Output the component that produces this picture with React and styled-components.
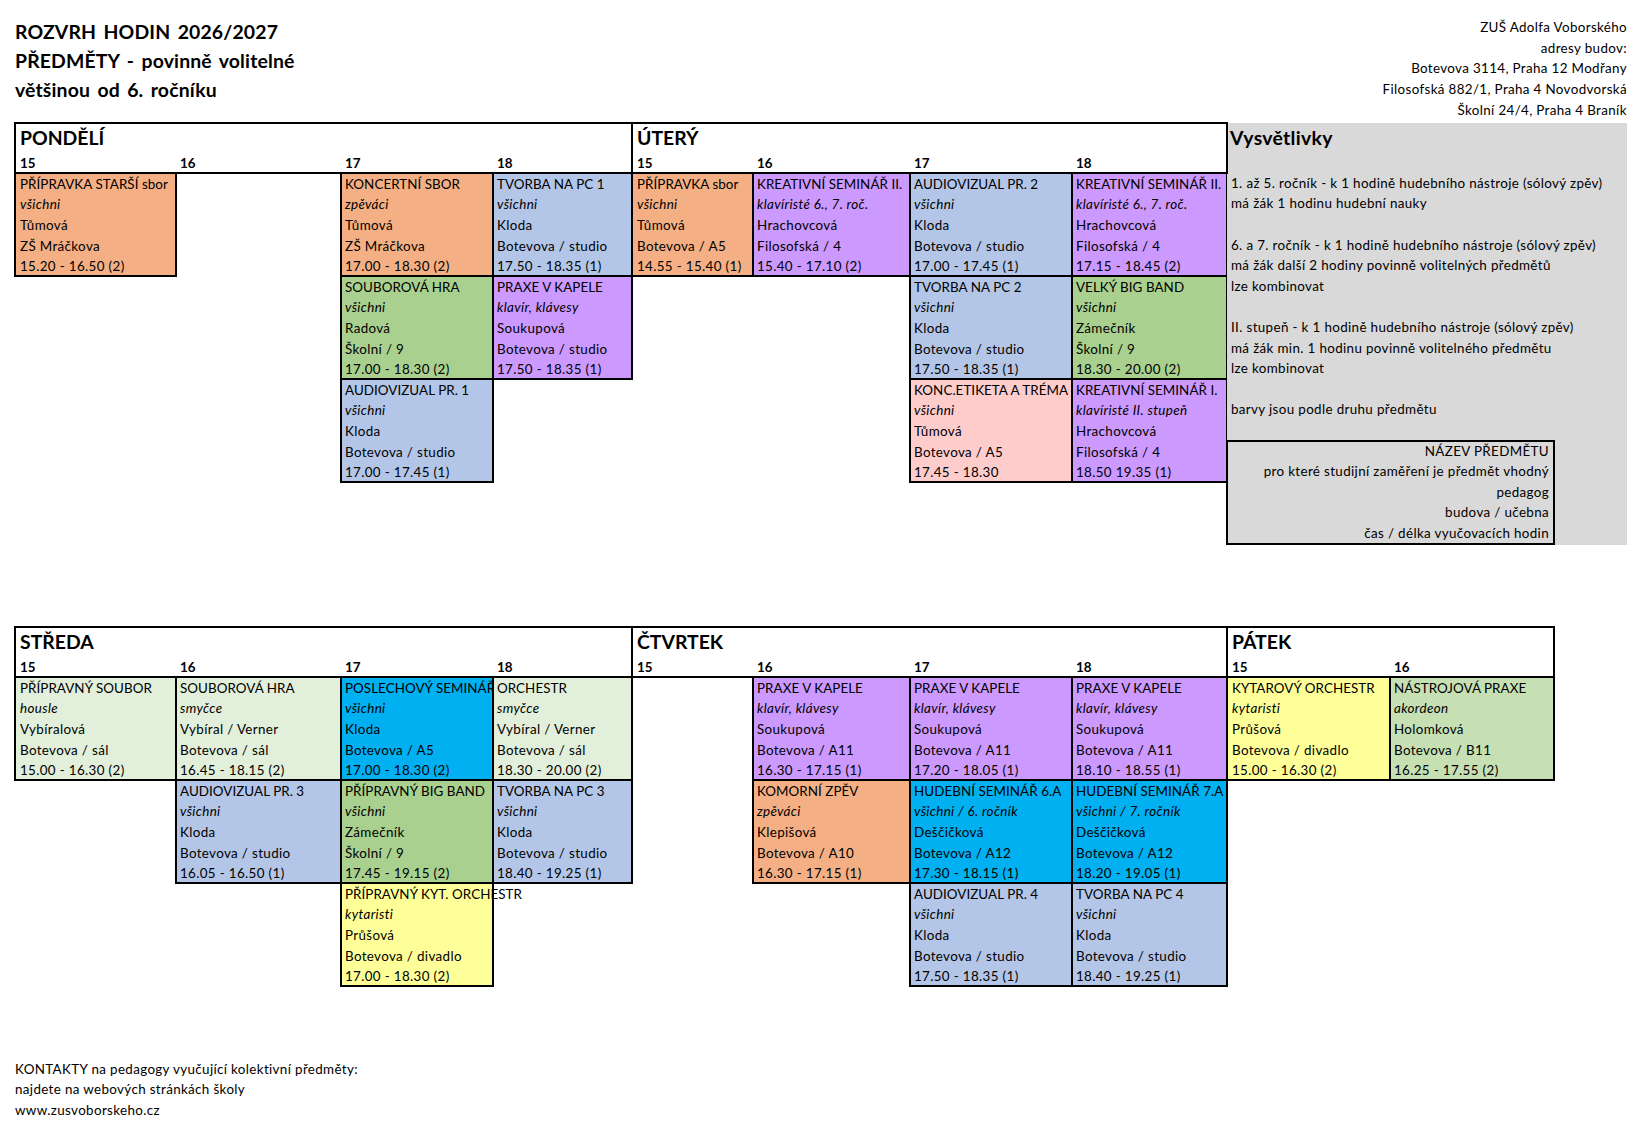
import React from "react"
import styled, { createGlobalStyle } from "styled-components"

const GlobalStyle = createGlobalStyle`
  html, body {
    margin: 0;
    padding: 0;
    background: #fff;
  }
  body {
    font-family: Lato, "Open Sans", sans-serif;
    color: #000;
  }
`

const ROW = 20.6

const fills = {
  orange: "#F4B084",
  blue: "#B4C6E7",
  purple: "#CC99FF",
  green: "#A9D08E",
  mint: "#E2EFDA",
  cyan: "#00B0F0",
  yellow: "#FFFF99",
  pink: "#FFCCCC",
  sage: "#C6E0B4",
}

const Page = styled.div`
  width: 1646px;
  height: 1136px;
  box-sizing: border-box;
  padding: 17px 19px 0 15px;
  font-size: 13.4px;
  letter-spacing: 0.35px;
`

const TopBar = styled.header`
  display: flex;
  justify-content: space-between;
  align-items: flex-start;
`

const Title = styled.h1`
  margin: 0;
  font-size: 19.4px;
  font-weight: 700;
  line-height: 29px;
  letter-spacing: 0.15px;
  word-spacing: 2.5px;
`

const Address = styled.div`
  text-align: right;
  line-height: 20.7px;
`

const Section = styled.section`
  display: flex;
  align-items: flex-start;
  margin-top: ${p => p.$gap}px;
`

const Table = styled.div`
  width: ${p => p.$width}px;
`

const Head = styled.div`
  outline: 2px solid #000;
  outline-offset: -1px;
  height: 50.3px;
  position: relative;
  z-index: 1;
`

const DayName = styled.div`
  height: 30px;
  padding: 3px 0 0 5px;
  box-sizing: border-box;
  font-size: 19.4px;
  font-weight: 700;
  line-height: 24px;
  letter-spacing: 0;
`

const HourRow = styled.div`
  display: grid;
  grid-template-columns: ${p => p.$cols};
  height: 20.3px;
  line-height: 20.3px;
  font-weight: 700;
  letter-spacing: 0;
`

const Hour = styled.div`
  padding-left: ${p => (p.$first ? 5 : 4)}px;
`

const Body = styled.div`
  display: grid;
  grid-template-columns: ${p => p.$cols};
  grid-template-rows: repeat(3, ${ROW * 5}px);
`

const Cell = styled.div`
  grid-column: ${p => p.$col + 1};
  grid-row: ${p => p.$row + 1};
  background: ${p => fills[p.$fill]};
  outline: 2px solid #000;
  outline-offset: -1px;
  padding: 1px 0 0 ${p => (p.$col === 0 ? 5 : 4)}px;
  line-height: ${ROW}px;
  white-space: nowrap;
  position: relative;
`

const Line = styled.div`
  font-style: ${p => (p.$italic ? "italic" : "normal")};
  letter-spacing: ${p => (p.$caps ? "0.05px" : "0.35px")};
`

const Panel = styled.aside`
  width: 400px;
  height: 422px;
  background: #d9d9d9;
  line-height: ${ROW}px;
  position: relative;
`

const PanelTitle = styled.div`
  height: 50.3px;
  padding: 3px 0 0 3px;
  box-sizing: border-box;
  font-size: 19.4px;
  font-weight: 700;
  line-height: 24px;
  letter-spacing: 0.3px;
`

const Note = styled.p`
  margin: 0 0 ${ROW}px;
  padding-left: 4px;
`

const KeyBox = styled.div`
  width: 327px;
  height: ${ROW * 5}px;
  outline: 2px solid #000;
  outline-offset: -1px;
  text-align: right;
  padding-right: 5px;
  box-sizing: border-box;
`

const Footer = styled.footer`
  margin-top: 73px;
  line-height: ${ROW}px;
`

const W1 = [161, 165, 152, 139]
const W2 = [121, 157, 162, 155]
const W3 = [163, 164]

const c = (col, row, fill, lines) => ({ col, row, fill, lines })

const monday = [
  c(0, 0, "orange", ["PŘÍPRAVKA STARŠÍ sbor", "všichni", "Tůmová", "ZŠ Mráčkova", "15.20 - 16.50 (2)"]),
  c(2, 0, "orange", ["KONCERTNÍ SBOR", "zpěváci", "Tůmová", "ZŠ Mráčkova", "17.00 - 18.30 (2)"]),
  c(3, 0, "blue", ["TVORBA NA PC 1", "všichni", "Kloda", "Botevova / studio", "17.50 - 18.35 (1)"]),
  c(2, 1, "green", ["SOUBOROVÁ HRA", "všichni", "Radová", "Školní / 9", "17.00 - 18.30 (2)"]),
  c(3, 1, "purple", ["PRAXE V KAPELE", "klavír, klávesy", "Soukupová", "Botevova / studio", "17.50 - 18.35 (1)"]),
  c(2, 2, "blue", ["AUDIOVIZUAL PR. 1", "všichni", "Kloda", "Botevova / studio", "17.00 - 17.45 (1)"]),
]

const tuesday = [
  c(0, 0, "orange", ["PŘÍPRAVKA sbor", "všichni", "Tůmová", "Botevova / A5", "14.55 - 15.40 (1)"]),
  c(1, 0, "purple", ["KREATIVNÍ SEMINÁŘ II.", "klavíristé 6., 7. roč.", "Hrachovcová", "Filosofská / 4", "15.40 - 17.10 (2)"]),
  c(2, 0, "blue", ["AUDIOVIZUAL PR. 2", "všichni", "Kloda", "Botevova / studio", "17.00 - 17.45 (1)"]),
  c(3, 0, "purple", ["KREATIVNÍ SEMINÁŘ II.", "klavíristé 6., 7. roč.", "Hrachovcová", "Filosofská / 4", "17.15 - 18.45 (2)"]),
  c(2, 1, "blue", ["TVORBA NA PC 2", "všichni", "Kloda", "Botevova / studio", "17.50 - 18.35 (1)"]),
  c(3, 1, "green", ["VELKÝ BIG BAND", "všichni", "Zámečník", "Školní / 9", "18.30 - 20.00 (2)"]),
  c(2, 2, "pink", ["KONC.ETIKETA A TRÉMA", "všichni", "Tůmová", "Botevova / A5", "17.45 - 18.30"]),
  c(3, 2, "purple", ["KREATIVNÍ SEMINÁŘ I.", "klavíristé II. stupeň", "Hrachovcová", "Filosofská / 4", "18.50  19.35 (1)"]),
]

const wednesday = [
  c(0, 0, "mint", ["PŘÍPRAVNÝ SOUBOR", "housle", "Vybíralová", "Botevova / sál", "15.00 - 16.30 (2)"]),
  c(1, 0, "mint", ["SOUBOROVÁ HRA", "smyčce", "Vybíral / Verner", "Botevova / sál", "16.45 - 18.15 (2)"]),
  c(2, 0, "cyan", ["POSLECHOVÝ SEMINÁŘ", "všichni", "Kloda", "Botevova / A5", "17.00 - 18.30 (2)"]),
  c(3, 0, "mint", ["ORCHESTR", "smyčce", "Vybíral / Verner", "Botevova / sál", "18.30 - 20.00 (2)"]),
  c(1, 1, "blue", ["AUDIOVIZUAL PR. 3", "všichni", "Kloda", "Botevova / studio", "16.05 - 16.50 (1)"]),
  c(2, 1, "green", ["PŘÍPRAVNÝ BIG BAND", "všichni", "Zámečník", "Školní / 9", "17.45 - 19.15 (2)"]),
  c(3, 1, "blue", ["TVORBA NA PC 3", "všichni", "Kloda", "Botevova / studio", "18.40 - 19.25 (1)"]),
  c(2, 2, "yellow", ["PŘÍPRAVNÝ KYT. ORCHESTR", "kytaristi", "Průšová", "Botevova / divadlo", "17.00 - 18.30 (2)"]),
]

const thursday = [
  c(1, 0, "purple", ["PRAXE V KAPELE", "klavír, klávesy", "Soukupová", "Botevova / A11", "16.30 - 17.15 (1)"]),
  c(2, 0, "purple", ["PRAXE V KAPELE", "klavír, klávesy", "Soukupová", "Botevova / A11", "17.20 - 18.05 (1)"]),
  c(3, 0, "purple", ["PRAXE V KAPELE", "klavír, klávesy", "Soukupová", "Botevova / A11", "18.10 - 18.55 (1)"]),
  c(1, 1, "orange", ["KOMORNÍ ZPĚV", "zpěváci", "Klepišová", "Botevova / A10", "16.30 - 17.15 (1)"]),
  c(2, 1, "cyan", ["HUDEBNÍ SEMINÁŘ 6.A", "všichni / 6. ročník", "Deščičková", "Botevova / A12", "17.30 - 18.15 (1)"]),
  c(3, 1, "cyan", ["HUDEBNÍ SEMINÁŘ 7.A", "všichni / 7. ročník", "Deščičková", "Botevova / A12", "18.20 - 19.05 (1)"]),
  c(2, 2, "blue", ["AUDIOVIZUAL PR. 4", "všichni", "Kloda", "Botevova / studio", "17.50 - 18.35 (1)"]),
  c(3, 2, "blue", ["TVORBA NA PC 4", "všichni", "Kloda", "Botevova / studio", "18.40 - 19.25 (1)"]),
]

const friday = [
  c(0, 0, "yellow", ["KYTAROVÝ ORCHESTR", "kytaristi", "Průšová", "Botevova / divadlo", "15.00 - 16.30 (2)"]),
  c(1, 0, "sage", ["NÁSTROJOVÁ PRAXE", "akordeon", "Holomková", "Botevova / B11", "16.25 - 17.55 (2)"]),
]

const Day = ({ name, widths, hours, cells }) => {
  const cols = widths.map(w => `${w}px`).join(" ")
  const total = widths.reduce((a, b) => a + b, 0)
  return (
    <Table $width={total}>
      <Head>
        <DayName>{name}</DayName>
        <HourRow $cols={cols}>
          {hours.map((h, i) => (
            <Hour key={h} $first={i === 0}>{h}</Hour>
          ))}
        </HourRow>
      </Head>
      <Body $cols={cols}>
        {cells.map((cell, i) => (
          <Cell key={i} $col={cell.col} $row={cell.row} $fill={cell.fill}>
            {cell.lines.map((t, j) => (
              <Line key={j} $caps={j === 0} $italic={j === 1}>{t}</Line>
            ))}
          </Cell>
        ))}
      </Body>
    </Table>
  )
}

const hours4 = [15, 16, 17, 18]

export default function App() {
  return (
    <>
      <GlobalStyle />
      <Page>
        <TopBar>
          <Title>
            ROZVRH HODIN 2026/2027
            <br />
            PŘEDMĚTY - povinně volitelné
            <br />
            většinou od 6. ročníku
          </Title>
          <Address>
            ZUŠ Adolfa Voborského
            <br />
            adresy budov:
            <br />
            Botevova 3114, Praha 12 Modřany
            <br />
            Filosofská 882/1, Praha 4 Novodvorská
            <br />
            Školní 24/4, Praha 4 Braník
          </Address>
        </TopBar>

        <Section $gap={2}>
          <Day name="PONDĚLÍ" widths={W1} hours={hours4} cells={monday} />
          <Day name="ÚTERÝ" widths={W2} hours={hours4} cells={tuesday} />
          <Panel>
            <PanelTitle>Vysvětlivky</PanelTitle>
            <Note>
              1. až 5. ročník - k 1 hodině hudebního nástroje (sólový zpěv)
              <br />
              má žák 1 hodinu hudební nauky
            </Note>
            <Note>
              6. a 7. ročník - k 1 hodině hudebního nástroje (sólový zpěv)
              <br />
              má žák další 2 hodiny povinně volitelných předmětů
              <br />
              lze kombinovat
            </Note>
            <Note>
              II. stupeň - k 1 hodině hudebního nástroje (sólový zpěv)
              <br />
              má žák min. 1 hodinu povinně volitelného předmětu
              <br />
              lze kombinovat
            </Note>
            <Note>barvy jsou podle druhu předmětu</Note>
            <KeyBox>
              NÁZEV PŘEDMĚTU
              <br />
              pro které studijní zaměření je předmět vhodný
              <br />
              pedagog
              <br />
              budova / učebna
              <br />
              čas / délka vyučovacích hodin
            </KeyBox>
          </Panel>
        </Section>

        <Section $gap={82}>
          <Day name="STŘEDA" widths={W1} hours={hours4} cells={wednesday} />
          <Day name="ČTVRTEK" widths={W2} hours={hours4} cells={thursday} />
          <Day name="PÁTEK" widths={W3} hours={[15, 16]} cells={friday} />
        </Section>

        <Footer>
          KONTAKTY na pedagogy vyučující kolektivní předměty:
          <br />
          najdete na webových stránkách školy
          <br />
          www.zusvoborskeho.cz
        </Footer>
      </Page>
    </>
  )
}
